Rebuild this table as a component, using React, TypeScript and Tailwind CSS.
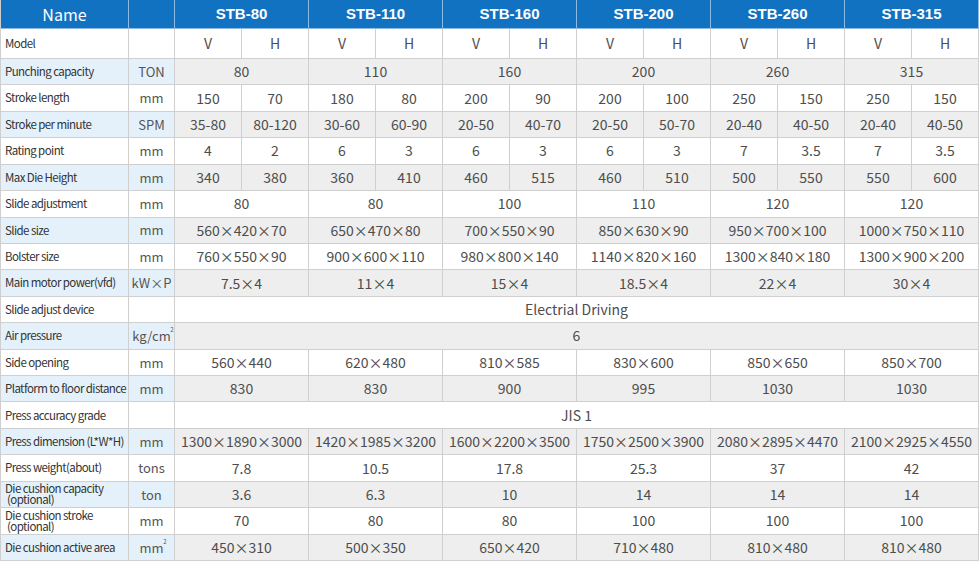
import React from "react";

type Row = {
  label: React.ReactNode;
  unit?: React.ReactNode;
  kind: "vh" | "pair" | "all";
  values: string[];
};

const models = ["STB-80", "STB-110", "STB-160", "STB-200", "STB-260", "STB-315"];

const sq = (base: string) => (
  <span className="relative">
    {base}
    <span className="absolute -right-[3px] top-[1px] text-[6px] leading-none">2</span>
  </span>
);

const rows: Row[] = [
  { label: "Model", kind: "vh", values: Array(6).fill(["V", "H"]).flat() },
  { label: "Punching capacity", unit: "TON", kind: "pair", values: ["80", "110", "160", "200", "260", "315"] },
  { label: "Stroke length", unit: "mm", kind: "vh", values: ["150", "70", "180", "80", "200", "90", "200", "100", "250", "150", "250", "150"] },
  { label: "Stroke per minute", unit: "SPM", kind: "vh", values: ["35-80", "80-120", "30-60", "60-90", "20-50", "40-70", "20-50", "50-70", "20-40", "40-50", "20-40", "40-50"] },
  { label: "Rating point", unit: "mm", kind: "vh", values: ["4", "2", "6", "3", "6", "3", "6", "3", "7", "3.5", "7", "3.5"] },
  { label: "Max Die Height", unit: "mm", kind: "vh", values: ["340", "380", "360", "410", "460", "515", "460", "510", "500", "550", "550", "600"] },
  { label: "Slide adjustment", unit: "mm", kind: "pair", values: ["80", "80", "100", "110", "120", "120"] },
  { label: "Slide size", unit: "mm", kind: "pair", values: ["560×420×70", "650×470×80", "700×550×90", "850×630×90", "950×700×100", "1000×750×110"] },
  { label: "Bolster size", unit: "mm", kind: "pair", values: ["760×550×90", "900×600×110", "980×800×140", "1140×820×160", "1300×840×180", "1300×900×200"] },
  { label: "Main motor power(vfd)", unit: "kW×P", kind: "pair", values: ["7.5×4", "11×4", "15×4", "18.5×4", "22×4", "30×4"] },
  { label: "Slide adjust device", kind: "all", values: ["Electrial Driving"] },
  { label: "Air pressure", unit: sq("kg/cm"), kind: "all", values: ["6"] },
  { label: "Side opening", unit: "mm", kind: "pair", values: ["560×440", "620×480", "810×585", "830×600", "850×650", "850×700"] },
  { label: "Platform to floor distance", unit: "mm", kind: "pair", values: ["830", "830", "900", "995", "1030", "1030"] },
  { label: "Press accuracy grade", kind: "all", values: ["JIS 1"] },
  { label: "Press dimension (L*W*H)", unit: "mm", kind: "pair", values: ["1300×1890×3000", "1420×1985×3200", "1600×2200×3500", "1750×2500×3900", "2080×2895×4470", "2100×2925×4550"] },
  { label: "Press weight(about)", unit: "tons", kind: "pair", values: ["7.8", "10.5", "17.8", "25.3", "37", "42"] },
  {
    label: (
      <span className="block leading-[11px]">
        Die cushion capacity
        <br />
        &nbsp;(optional)
      </span>
    ),
    unit: "ton",
    kind: "pair",
    values: ["3.6", "6.3", "10", "14", "14", "14"],
  },
  {
    label: (
      <span className="block leading-[11px]">
        Die cushion stroke
        <br />
        &nbsp;(optional)
      </span>
    ),
    unit: "mm",
    kind: "pair",
    values: ["70", "80", "80", "100", "100", "100"],
  },
  { label: "Die cushion active area", unit: sq("mm"), kind: "pair", values: ["450×310", "500×350", "650×420", "710×480", "810×480", "810×480"] },
];

const cell = "flex items-center justify-center border-r border-b border-[#cfcfcf]";

export default function App() {
  return (
    <div className="w-[979px] h-[561px] overflow-hidden bg-white font-['Noto_Sans_CJK_SC','Noto_Sans',sans-serif]">
      <div className="grid h-[561px] grid-cols-[128px_46px_repeat(12,1fr)] grid-rows-[29px_30px_repeat(19,1fr)] border-l border-[#cfcfcf]">
        {/* Header */}
        <div className="flex items-center justify-center bg-[#1272c2] border-r border-b border-[#8dbbe3] text-[16px] text-white">
          Name
        </div>
        <div className="bg-[#1272c2] border-r border-b border-[#8dbbe3]" />
        {models.map((m) => (
          <div
            key={m}
            className="col-span-2 flex items-center justify-center bg-[#1272c2] border-r border-b border-[#8dbbe3] text-[15px] font-bold text-white font-['Liberation_Sans',Arial,sans-serif]"
          >
            {m}
          </div>
        ))}

        {rows.map((r, i) => {
          const shaded = i % 2 === 1;
          const side = shaded ? "bg-[#e5f1fa]" : "bg-white";
          const data = shaded ? "bg-[#eeeeee]" : "bg-white";
          return (
            <React.Fragment key={i}>
              <div className={`flex items-center border-r border-b border-[#cfcfcf] pl-1 text-[11.5px] tracking-[-0.05em] text-[#333] whitespace-nowrap ${side}`}>
                {r.label}
              </div>
              <div className={`${cell} text-[13px] text-[#555] ${side}`}>{r.unit}</div>
              {r.values.map((v, j) => (
                <div
                  key={j}
                  className={`${cell} ${data} text-[14px] text-[#4d4d4d] whitespace-nowrap ${
                    r.kind === "all" ? "col-span-12" : r.kind === "pair" ? "col-span-2" : ""
                  }`}
                >
                  {v}
                </div>
              ))}
            </React.Fragment>
          );
        })}
      </div>
    </div>
  );
}
